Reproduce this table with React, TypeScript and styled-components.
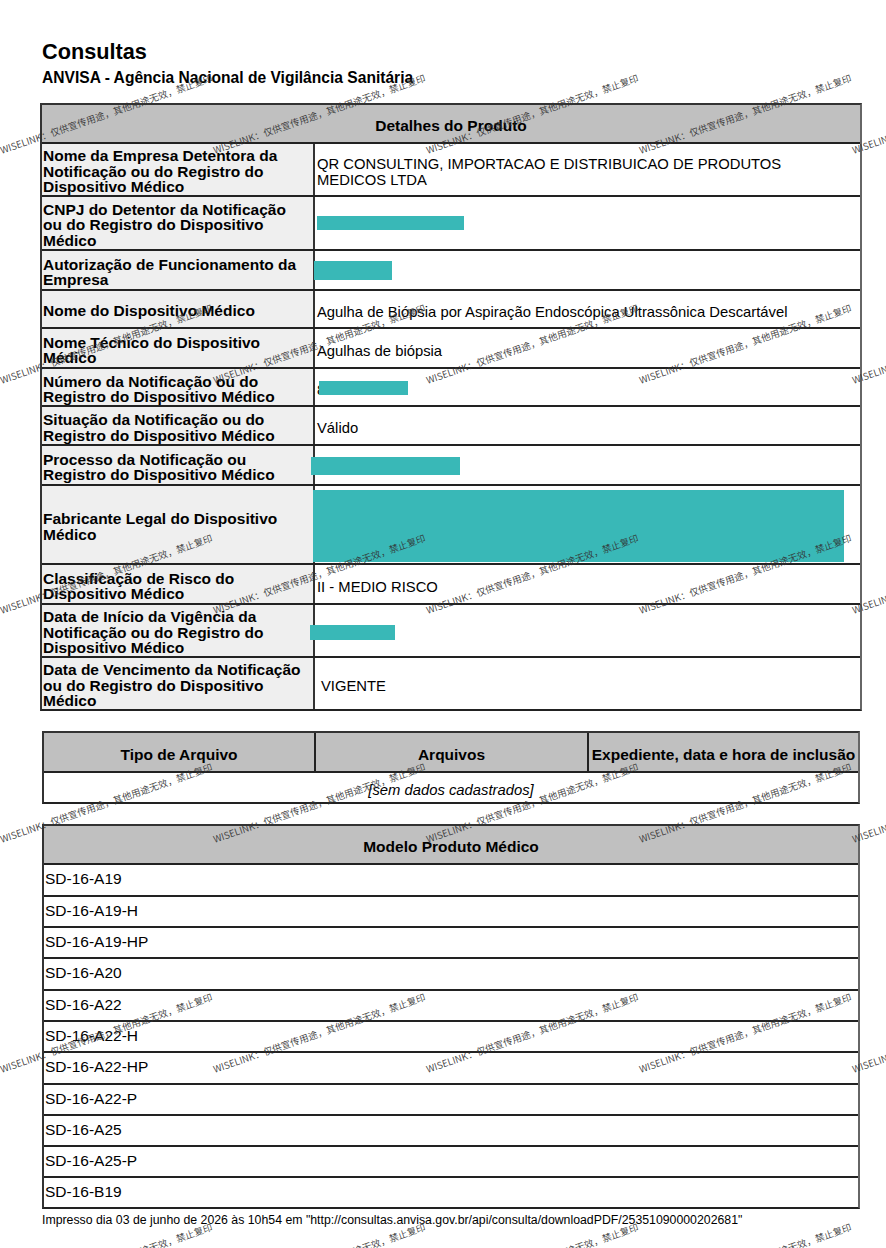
import React from 'react';
import styled, { createGlobalStyle } from 'styled-components';

const GlobalStyle = createGlobalStyle`
  html, body {
    margin: 0;
    padding: 0;
    background: #ffffff;
  }
  body {
    font-family: "Liberation Sans", Arial, sans-serif;
    color: #000;
  }
`;

const Page = styled.div`
  position: relative;
  width: 886px;
  height: 1248px;
  overflow: hidden;
  box-sizing: border-box;
  padding: 39px 0 0 40px;
`;

const Title = styled.h1`
  margin: 0 0 0 2px;
  font-size: 21.7px;
  line-height: 26px;
  font-weight: bold;
`;

const Subtitle = styled.h2`
  margin: 4px 0 0 2px;
  font-size: 15.6px;
  line-height: 18px;
  font-weight: bold;
`;

const Table = styled.div<{ $width: number; $indent?: number; $gap: number }>`
  width: ${(p) => p.$width}px;
  margin: ${(p) => p.$gap}px 0 0 ${(p) => p.$indent ?? 0}px;
  box-sizing: border-box;
  border: 2px solid #333;
  border-right-color: #666;
  border-bottom-color: #222;
`;

const HeaderBar = styled.div<{ $h: number; $cols?: number }>`
  display: grid;
  grid-template-columns: ${(p) => (p.$cols === 3 ? '270px 273px 1fr' : '1fr')};
  height: ${(p) => p.$h}px;
  background: #c0c0c0;
`;

const HeaderCell = styled.div`
  display: flex;
  align-items: center;
  justify-content: center;
  padding-top: 5px;
  box-sizing: border-box;
  font-size: 15.5px;
  font-weight: bold;
  white-space: nowrap;
  & + & {
    border-left: 2px solid #222;
  }
`;

const DetailRow = styled.div<{ $h: number }>`
  display: grid;
  grid-template-columns: 273px 1fr;
  height: ${(p) => p.$h}px;
  border-top: 2px solid #222;
`;

const Label = styled.div`
  display: flex;
  align-items: center;
  box-sizing: border-box;
  padding: 4px 4px 0 1px;
  background: #efefef;
  border-right: 2px solid #333;
  font-size: 15.5px;
  line-height: 15.5px;
  font-weight: bold;
`;

const Value = styled.div<{ $pad?: number }>`
  position: relative;
  display: flex;
  align-items: center;
  box-sizing: border-box;
  padding: 5px 60px 0 ${(p) => p.$pad ?? 2}px;
  font-size: 14.8px;
  line-height: 16px;
`;

const Redaction = styled.span`
  position: absolute;
  background: #39b8b7;
`;

const EmptyRow = styled.div`
  height: 31px;
  box-sizing: border-box;
  padding-top: 4px;
  border-top: 2px solid #222;
  display: flex;
  align-items: center;
  justify-content: center;
  font-size: 14.8px;
  font-style: italic;
`;

const ModelRow = styled.div<{ $h: number }>`
  height: ${(p) => p.$h}px;
  box-sizing: border-box;
  padding: 0 0 2px 1px;
  border-top: 2px solid #222;
  display: flex;
  align-items: center;
  font-size: 15.5px;
`;

const Footer = styled.p`
  margin: 4px 0 0 2px;
  font-size: 12.3px;
  line-height: 15px;
  white-space: nowrap;
`;

const Marks = styled.div`
  position: absolute;
  inset: 0;
  pointer-events: none;
  z-index: 5;
`;

const Mark = styled.span`
  position: absolute;
  white-space: nowrap;
  font-family: "Noto Sans CJK SC", "Noto Sans", sans-serif;
  font-size: 9.5px;
  line-height: 10px;
  color: rgba(50, 50, 50, 0.9);
  transform: rotate(-19deg);
  transform-origin: 0 100%;
`;

type Box = { x: number; y: number; w: number; h: number };

interface Detail {
  label: string;
  value?: string;
  h: number;
  pad?: number;
  box?: Box;
}

const details: Detail[] = [
  {
    label: 'Nome da Empresa Detentora da Notificação ou do Registro do Dispositivo Médico',
    value: 'QR CONSULTING, IMPORTACAO E DISTRIBUICAO DE PRODUTOS MEDICOS LTDA',
    h: 51,
  },
  {
    label: 'CNPJ do Detentor da Notificação ou do Registro do Dispositivo Médico',
    h: 52,
    box: { x: 2, y: 19, w: 147, h: 14 },
  },
  {
    label: 'Autorização de Funcionamento da Empresa',
    h: 38,
    box: { x: -1, y: 10, w: 78, h: 19 },
  },
  {
    label: 'Nome do Dispositivo Médico',
    value: 'Agulha de Biópsia por Aspiração Endoscópica Ultrassônica Descartável',
    h: 36,
  },
  { label: 'Nome Técnico do Dispositivo Médico', value: 'Agulhas de biópsia', h: 38 },
  {
    label: 'Número da Notificação ou do Registro do Dispositivo Médico',
    value: '8',
    h: 36,
    box: { x: 4, y: 12, w: 89, h: 14 },
  },
  { label: 'Situação da Notificação ou do Registro do Dispositivo Médico', value: 'Válido', h: 37 },
  {
    label: 'Processo da Notificação ou Registro do Dispositivo Médico',
    h: 38,
    box: { x: -4, y: 11, w: 149, h: 18 },
  },
  {
    label: 'Fabricante Legal do Dispositivo Médico',
    h: 77,
    box: { x: -2, y: 4, w: 531, h: 72 },
  },
  { label: 'Classificação de Risco do Dispositivo Médico', value: 'II - MEDIO RISCO', h: 38 },
  {
    label: 'Data de Início da Vigência da Notificação ou do Registro do Dispositivo Médico',
    h: 51,
    box: { x: -5, y: 20, w: 85, h: 15 },
  },
  {
    label: 'Data de Vencimento da Notificação ou do Registro do Dispositivo Médico',
    value: 'VIGENTE',
    h: 51,
    pad: 6,
  },
];

const models = [
  'SD-16-A19',
  'SD-16-A19-H',
  'SD-16-A19-HP',
  'SD-16-A20',
  'SD-16-A22',
  'SD-16-A22-H',
  'SD-16-A22-HP',
  'SD-16-A22-P',
  'SD-16-A25',
  'SD-16-A25-P',
  'SD-16-B19',
];
// row heights as laid out in the printed PDF (border included)
const modelHeights = [32, 31, 31, 32, 31, 31, 32, 31, 31, 31, 31];

const MARK_TEXT = 'WISELINK：仅供宣传用途，其他用途无效，禁止复印';

const marks: { x: number; y: number }[] = [];
for (let r = 0; r < 6; r++) {
  for (let c = 0; c < 5; c++) {
    marks.push({ x: 2 + 213 * c, y: 155 + 229.75 * r });
  }
}

export default function App() {
  return (
    <Page>
      <GlobalStyle />
      <Title>Consultas</Title>
      <Subtitle>ANVISA - Agência Nacional de Vigilância Sanitária</Subtitle>

      <Table $width={822} $gap={16}>
        <HeaderBar $h={37}>
          <HeaderCell>Detalhes do Produto</HeaderCell>
        </HeaderBar>
        {details.map((d) => (
          <DetailRow key={d.label} $h={d.h}>
            <Label>{d.label}</Label>
            <Value $pad={d.pad}>
              {d.value}
              {d.box && (
                <Redaction
                  style={{ left: d.box.x, top: d.box.y, width: d.box.w, height: d.box.h }}
                />
              )}
            </Value>
          </DetailRow>
        ))}
      </Table>

      <Table $width={818} $indent={2} $gap={20}>
        <HeaderBar $h={38} $cols={3}>
          <HeaderCell>Tipo de Arquivo</HeaderCell>
          <HeaderCell>Arquivos</HeaderCell>
          <HeaderCell>Expediente, data e hora de inclusão</HeaderCell>
        </HeaderBar>
        <EmptyRow>[sem dados cadastrados]</EmptyRow>
      </Table>

      <Table $width={818} $indent={2} $gap={20}>
        <HeaderBar $h={37}>
          <HeaderCell>Modelo Produto Médico</HeaderCell>
        </HeaderBar>
        {models.map((m, i) => (
          <ModelRow key={m} $h={modelHeights[i]}>
            {m}
          </ModelRow>
        ))}
      </Table>

      <Footer>
        Impresso dia 03 de junho de 2026 às 10h54 em
        "http://consultas.anvisa.gov.br/api/consulta/downloadPDF/25351090000202681"
      </Footer>

      <Marks>
        {marks.map((m, i) => (
          <Mark key={i} style={{ left: m.x, top: m.y - 10 }}>
            {MARK_TEXT}
          </Mark>
        ))}
      </Marks>
    </Page>
  );
}
